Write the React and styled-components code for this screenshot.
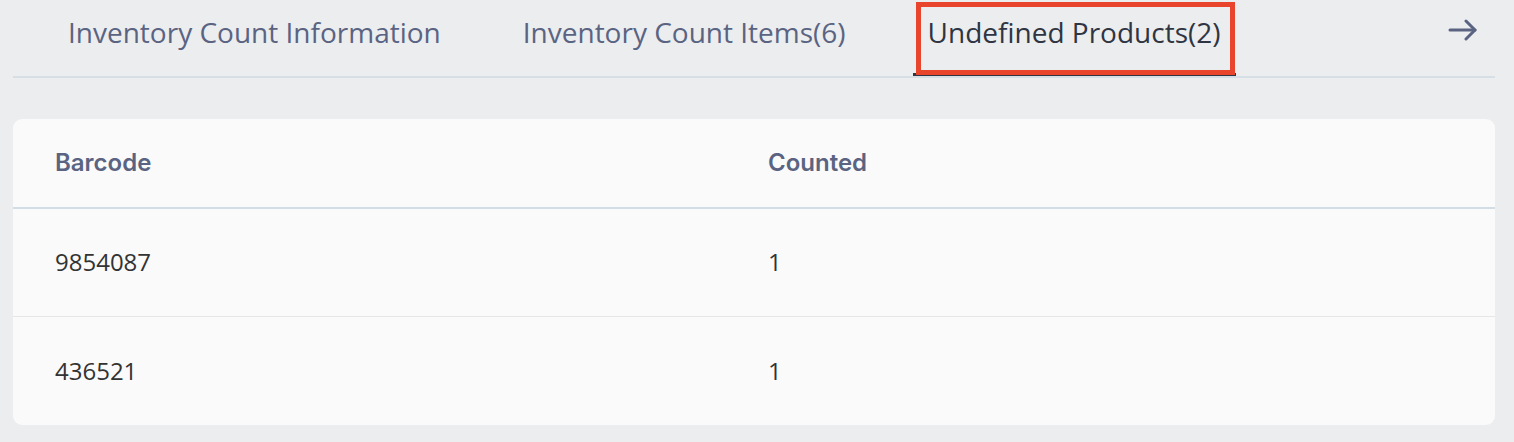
import React from "react";
import styled, { createGlobalStyle } from "styled-components";

const Global = createGlobalStyle`
  html, body { margin: 0; padding: 0; background: #ecedef; }
  body { font-family: "Open Sans", "Noto Sans", sans-serif; }
`;

const Page = styled.div`
  padding: 0 19px 0 13px;
  width: 1514px;
  box-sizing: border-box;
`;

const TabBar = styled.div`
  display: flex;
  align-items: stretch;
  border-bottom: 2px solid #d6dee6;
  height: 76px;
  padding-left: 40px;
`;

const TabList = styled.div`
  display: flex;
  gap: 52px;
  flex: 1;
`;

const Tab = styled.div`
  position: relative;
  padding: 0 15px 9px;
  display: flex;
  align-items: center;
  box-sizing: content-box;
  height: 64px;
  font-size: 28px;
  color: ${(p) => (p.$active ? "#2f3542" : "#5a6482")};
  border-bottom: 3px solid ${(p) => (p.$active ? "#2f3542" : "transparent")};
  white-space: nowrap;
  ${(p) =>
    p.$highlight &&
    `
    &::after {
      content: "";
      position: absolute;
      left: 3px;
      right: 1px;
      top: 2px;
      bottom: -2px;
      border: 5px solid #e8452c;
    }
  `}
`;

const ArrowButton = styled.div`
  width: 60px;
  display: flex;
  justify-content: center;
  align-items: flex-start;
  padding-top: 19px;
  padding-right: 5px;
  box-sizing: border-box;
  color: #5a6482;
`;

const Card = styled.div`
  margin-top: 41px;
  background: #fafafa;
  border-radius: 9px;
  overflow: hidden;
`;

const Row = styled.div`
  display: grid;
  grid-template-columns: 1fr 1fr;
  padding: 0 28px 2px;
  height: ${(p) => p.$h}px;
  align-items: center;
  border-bottom: ${(p) => p.$border || "none"};
`;

const HeadCell = styled.div`
  padding: 0 14px;
  font-family: Inter, "Noto Sans", sans-serif;
  font-weight: 600;
  font-size: 24px;
  color: #5a6482;
`;

const Cell = styled.div`
  padding: 0 14px;
  font-size: 24px;
  color: #333;
`;

const rows = [
  { barcode: "9854087", counted: 1 },
  { barcode: "436521", counted: 1 },
];

export default function App() {
  return (
    <>
      <Global />
      <Page>
        <TabBar>
          <TabList>
            <Tab>Inventory Count Information</Tab>
            <Tab>Inventory Count Items(6)</Tab>
            <Tab $active $highlight>Undefined Products(2)</Tab>
          </TabList>
          <ArrowButton>
            <svg width="30" height="22" viewBox="0 0 30 22" fill="none" stroke="currentColor" strokeWidth="3" strokeLinecap="round" strokeLinejoin="round">
              <path d="M2 11H27" />
              <path d="M18 2L27 11L18 20" />
            </svg>
          </ArrowButton>
        </TabBar>
        <Card>
          <Row $h={86} $border="2px solid #d3dde6">
            <HeadCell>Barcode</HeadCell>
            <HeadCell>Counted</HeadCell>
          </Row>
          {rows.map((r, i) => (
            <Row key={r.barcode} $h={i === rows.length - 1 ? 106 : 105} $border={i < rows.length - 1 ? "1px solid #e6e6e6" : "none"}>
              <Cell>{r.barcode}</Cell>
              <Cell>{r.counted}</Cell>
            </Row>
          ))}
        </Card>
      </Page>
    </>
  );
}
